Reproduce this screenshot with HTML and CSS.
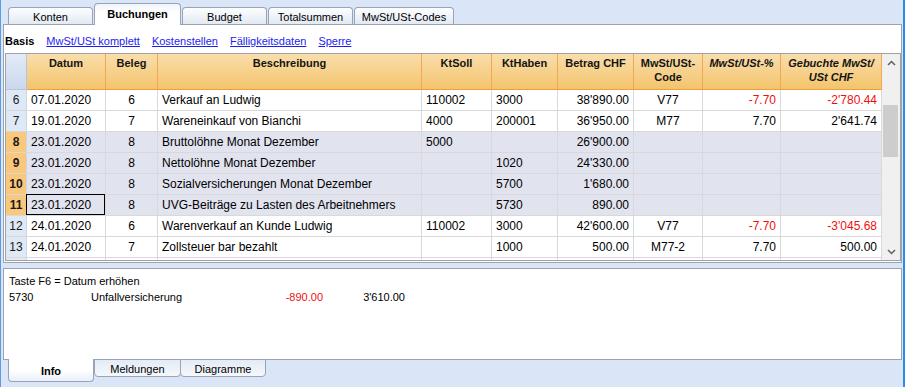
FILE: index.html
```html
<!DOCTYPE html>
<html lang="de">
<head>
<meta charset="utf-8">
<title>Buchungen</title>
<link rel="stylesheet" href="styles.css">
</head>
<body>
<div class="app">
  <div class="tabs">
    <div class="tab">Konten</div>
    <div class="tab active">Buchungen</div>
    <div class="tab">Budget</div>
    <div class="tab">Totalsummen</div>
    <div class="tab wide">MwSt/USt-Codes</div>
  </div>

  <div class="panel">
    <div class="views">
      <span class="view-cur">Basis</span>
      <a class="view-link">MwSt/USt komplett</a>
      <a class="view-link">Kostenstellen</a>
      <a class="view-link">Fälligkeitsdaten</a>
      <a class="view-link">Sperre</a>
    </div>

    <div class="grid">
      <div class="table">
        <div class="row head">
          <div class="c corner"></div>
          <div class="c">Datum</div>
          <div class="c">Beleg</div>
          <div class="c">Beschreibung</div>
          <div class="c">KtSoll</div>
          <div class="c">KtHaben</div>
          <div class="c">Betrag CHF</div>
          <div class="c">MwSt/USt-<br>Code</div>
          <div class="c it">MwSt/USt-%</div>
          <div class="c it">Gebuchte MwSt/<br>USt CHF</div>
        </div>

        <div class="row">
          <div class="c rh">6</div>
          <div class="c">07.01.2020</div>
          <div class="c ctr">6</div>
          <div class="c">Verkauf an Ludwig</div>
          <div class="c">110002</div>
          <div class="c">3000</div>
          <div class="c r">38'890.00</div>
          <div class="c ctr">V77</div>
          <div class="c r neg">-7.70</div>
          <div class="c r neg">-2'780.44</div>
        </div>
        <div class="row">
          <div class="c rh">7</div>
          <div class="c">19.01.2020</div>
          <div class="c ctr">7</div>
          <div class="c">Wareneinkauf von Bianchi</div>
          <div class="c">4000</div>
          <div class="c">200001</div>
          <div class="c r">36'950.00</div>
          <div class="c ctr">M77</div>
          <div class="c r">7.70</div>
          <div class="c r">2'641.74</div>
        </div>
        <div class="row sel">
          <div class="c rh">8</div>
          <div class="c">23.01.2020</div>
          <div class="c ctr">8</div>
          <div class="c">Bruttolöhne Monat Dezember</div>
          <div class="c">5000</div>
          <div class="c"></div>
          <div class="c r">26'900.00</div>
          <div class="c"></div>
          <div class="c"></div>
          <div class="c"></div>
        </div>
        <div class="row sel">
          <div class="c rh">9</div>
          <div class="c">23.01.2020</div>
          <div class="c ctr">8</div>
          <div class="c">Nettolöhne Monat Dezember</div>
          <div class="c"></div>
          <div class="c">1020</div>
          <div class="c r">24'330.00</div>
          <div class="c"></div>
          <div class="c"></div>
          <div class="c"></div>
        </div>
        <div class="row sel">
          <div class="c rh">10</div>
          <div class="c">23.01.2020</div>
          <div class="c ctr">8</div>
          <div class="c">Sozialversicherungen Monat Dezember</div>
          <div class="c"></div>
          <div class="c">5700</div>
          <div class="c r">1'680.00</div>
          <div class="c"></div>
          <div class="c"></div>
          <div class="c"></div>
        </div>
        <div class="row sel">
          <div class="c rh">11</div>
          <div class="c cur">23.01.2020</div>
          <div class="c ctr">8</div>
          <div class="c">UVG-Beiträge zu Lasten des Arbeitnehmers</div>
          <div class="c"></div>
          <div class="c">5730</div>
          <div class="c r">890.00</div>
          <div class="c"></div>
          <div class="c"></div>
          <div class="c"></div>
        </div>
        <div class="row">
          <div class="c rh">12</div>
          <div class="c">24.01.2020</div>
          <div class="c ctr">6</div>
          <div class="c">Warenverkauf an Kunde Ludwig</div>
          <div class="c">110002</div>
          <div class="c">3000</div>
          <div class="c r">42'600.00</div>
          <div class="c ctr">V77</div>
          <div class="c r neg">-7.70</div>
          <div class="c r neg">-3'045.68</div>
        </div>
        <div class="row">
          <div class="c rh">13</div>
          <div class="c">24.01.2020</div>
          <div class="c ctr">7</div>
          <div class="c">Zollsteuer bar bezahlt</div>
          <div class="c"></div>
          <div class="c">1000</div>
          <div class="c r">500.00</div>
          <div class="c ctr">M77-2</div>
          <div class="c r">7.70</div>
          <div class="c r">500.00</div>
        </div>
        <div class="row stub">
          <div class="c rh"></div><div class="c"></div><div class="c"></div><div class="c"></div><div class="c"></div>
          <div class="c"></div><div class="c"></div><div class="c"></div><div class="c"></div><div class="c"></div>
        </div>
      </div>

      <div class="scroll">
        <div class="sb-btn">
          <svg width="9" height="6" viewBox="0 0 9 6"><polyline points="1,5 4.5,1.5 8,5" fill="none" stroke="#606060" stroke-width="1.5"/></svg>
        </div>
        <div class="thumb"></div>
        <div class="sb-space"></div>
        <div class="sb-btn">
          <svg width="9" height="6" viewBox="0 0 9 6"><polyline points="1,1 4.5,4.5 8,1" fill="none" stroke="#606060" stroke-width="1.5"/></svg>
        </div>
      </div>
    </div>
  </div>

  <div class="info">
    <div class="info-line">Taste F6 = Datum erhöhen</div>
    <div class="info-row">
      <span>5730</span>
      <span>Unfallversicherung</span>
      <span class="r neg">-890.00</span>
      <span class="r">3'610.00</span>
    </div>
  </div>

  <div class="btabs">
    <div class="btab active">Info</div>
    <div class="btab">Meldungen</div>
    <div class="btab last">Diagramme</div>
  </div>
</div>
</body>
</html>
```

FILE: styles.css
```css
html, body {
  margin: 0;
  padding: 0;
}

body {
  width: 905px;
  height: 387px;
  overflow: hidden;
  background: #dae5f7;
  font-family: "Liberation Sans", Arial, sans-serif;
  color: #000;
}

.app {
  box-sizing: border-box;
  width: 905px;
  height: 387px;
  border-left: 1px solid #5b9be0;
  border-right: 2px solid #2a8de8;
  background: #dae5f7;
}

/* top tabs */
.tabs {
  height: 24px;
  display: flex;
  align-items: flex-end;
  gap: 1px;
  padding-left: 7px;
}

.tab {
  box-sizing: border-box;
  width: 85px;
  height: 17px;
  border: 1px solid #98a4b6;
  border-bottom: none;
  border-radius: 4px 4px 0 0;
  background: linear-gradient(#fdfeff, #e2e9f3);
  font-size: 11px;
  display: flex;
  align-items: center;
  justify-content: center;
  padding-top: 1px;
}

.tab.wide {
  width: 100px;
}

.tab.active {
  position: relative;
  z-index: 1;
  width: 87px;
  height: 22px;
  margin-bottom: -1px;
  padding-top: 0;
  padding-bottom: 2px;
  font-weight: bold;
  background: linear-gradient(#f1f5fb, #ffffff 45%);
}

/* main panel */
.panel {
  margin: 0 1px 0 2px;
  border: 1px solid #9ca3ad;
  background: #fff;
  padding: 0 0 1px 1px;
}

.views {
  box-sizing: border-box;
  height: 28px;
  padding-top: 3px;
  display: flex;
  align-items: center;
  gap: 12px;
  font-size: 11px;
}

.view-cur {
  font-weight: bold;
}

.view-link {
  color: #1d1df0;
  text-decoration: underline;
}

/* grid */
.grid {
  display: flex;
  border: 1px solid #a2a2a2;
}

.table {
  width: 876px;
}

.row {
  display: grid;
  grid-template-columns: 21px 79px 52px 264px 70px 66px 76px 69px 78px 101px;
}

.c {
  box-sizing: border-box;
  height: 21px;
  border-right: 1px solid #d9d9d9;
  border-bottom: 1px solid #d9d9d9;
  font-size: 12px;
  line-height: 20px;
  padding: 0 4px;
  white-space: nowrap;
  overflow: hidden;
  background: #fff;
}

.c.r {
  text-align: right;
}

.c.ctr {
  text-align: center;
}

.neg {
  color: #f01010;
}

.c.rh {
  padding: 0;
  text-align: center;
  background: #dfe8f5;
  border-right-color: #cdd5e0;
  color: #1a1a1a;
}

.row.sel .c {
  background: #e1e3ef;
}

.row.sel .c.rh {
  background: #f9c87c;
  font-weight: bold;
}

.c.cur {
  position: relative;
  overflow: visible;
}

.c.cur::after {
  content: "";
  position: absolute;
  left: -1px;
  top: -1px;
  right: 0;
  bottom: 0;
  border: 1px solid #000;
}

.head .c {
  height: 36px;
  padding: 2px 2px 0;
  line-height: 14px;
  font-size: 11px;
  font-weight: bold;
  text-align: center;
  white-space: normal;
  color: #141414;
  background: linear-gradient(#f9deac, #f4c46c);
  border-right: 1px solid #f0a94e;
  border-bottom: 1px solid #ef9f3a;
}

.head .c.it {
  font-style: italic;
}

.head .c.corner {
  background: linear-gradient(#e2ebf8, #cbd8ec);
  border-right-color: #b8c6db;
  border-bottom-color: #b8c6db;
}

.row.stub .c {
  height: 2px;
  border-bottom: none;
}

/* scrollbar */
.scroll {
  width: 18px;
  background: #f0f0f0;
  display: flex;
  flex-direction: column;
}

.sb-btn {
  height: 17px;
  display: flex;
  align-items: center;
  justify-content: center;
}

.thumb {
  margin: 34px 2px 0 1px;
  height: 52px;
  background: #cdcdcd;
}

.sb-space {
  flex: 1;
}

/* info panel */
.info {
  box-sizing: border-box;
  height: 92px;
  margin: 5px 1px 0 2px;
  border: 1px solid #9ca3ad;
  background: #fff;
  padding: 4px 0 0 5px;
  font-size: 11px;
  line-height: 16px;
}

.info-row {
  display: grid;
  grid-template-columns: 82px 160px 72px 82px;
}

.info-row .r {
  text-align: right;
}

/* bottom tabs */
.btabs {
  display: flex;
  padding-left: 7px;
  margin-top: -1px;
}

.btab {
  box-sizing: border-box;
  width: 87px;
  height: 18px;
  border: 1px solid #98a4b6;
  border-radius: 0 0 4px 4px;
  background: linear-gradient(#e4ebf7, #f5f8fc);
  font-size: 11px;
  display: flex;
  align-items: center;
  justify-content: center;
  padding-top: 1px;
}

.btab.active {
  width: 86px;
  height: 23px;
  border-top: none;
  font-weight: bold;
  padding-top: 2px;
  background: linear-gradient(#ffffff 50%, #e9eff9);
}

.btab.last {
  width: 86px;
  margin-left: -1px;
}
```
